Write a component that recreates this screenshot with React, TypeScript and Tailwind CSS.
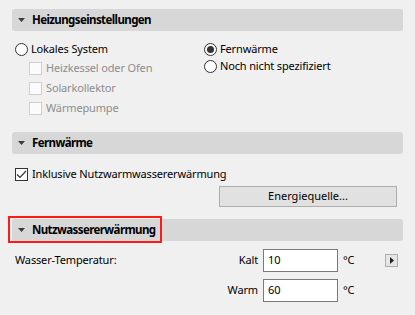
import React from 'react';

const font = { fontFamily: '"Noto Sans", "Segoe UI", sans-serif' };

function Caret() {
  return (
    <svg width="7" height="4" viewBox="0 0 7 4" className="shrink-0">
      <path d="M0 0H7L3.5 4Z" fill="#3c3c3c" />
    </svg>
  );
}

function SectionHeader({ title, marked }: { title: string; marked?: boolean }) {
  return (
    <div className="relative flex h-[22px] items-center gap-[7px] rounded-[3px] bg-[#d7d7d7] pl-[6px]">
      <Caret />
      <span className="text-[11.5px] font-bold leading-none tracking-[-0.6px] text-black">{title}</span>
      {marked && (
        <div className="pointer-events-none absolute left-[-4px] top-[-3px] h-[27px] w-[154px] border-2 border-[#ff1a1a]" />
      )}
    </div>
  );
}

function Radio({ label, checked }: { label: string; checked?: boolean }) {
  return (
    <div className="flex h-[17px] items-center gap-[3px]">
      <span className="flex h-[13px] w-[13px] items-center justify-center rounded-full border border-[#333] bg-white">
        {checked && <span className="h-[7px] w-[7px] rounded-full bg-[#333]" />}
      </span>
      <span className="text-[11px] tracking-[-0.15px] text-black">{label}</span>
    </div>
  );
}

function DisabledCheck({ label }: { label: string }) {
  return (
    <div className="flex h-[20px] items-center gap-[4px] pl-[14px]">
      <span className="h-[13px] w-[13px] border border-[#cfcfcf] bg-[#fbfbfb]" />
      <span className="text-[11px] tracking-[-0.15px] text-[#8d8d8d]">{label}</span>
    </div>
  );
}

function TempRow({
  left,
  label,
  value,
  arrow,
}: {
  left?: string;
  label: string;
  value: string;
  arrow?: boolean;
}) {
  return (
    <div className="flex h-[23px] items-center text-[11px] tracking-[-0.15px] text-black">
      <span className="flex-1 pl-[3px]">{left}</span>
      <span className="mr-[5px]">{label}</span>
      <div className="flex h-[23px] w-[75px] items-center border border-[#7a7a7a] bg-white pl-[4px]">
        {value}
      </div>
      <span className="ml-[5px] w-[42px]">°C</span>
      <div className="mr-[5px] w-[13px]">
        {arrow && (
          <div className="flex h-[13px] w-[13px] items-center justify-center border border-[#adadad] bg-[#e6e6e6]">
            <svg width="4" height="7" viewBox="0 0 4 7">
              <path d="M0 0L4 3.5L0 7Z" fill="#222" />
            </svg>
          </div>
        )}
      </div>
    </div>
  );
}

export default function App() {
  return (
    <div className="h-[315px] w-[415px] overflow-hidden bg-[#f0f0f0] px-[12px] pt-[9px]" style={font}>
      <SectionHeader title="Heizungseinstellungen" />

      <div className="mt-[10px] flex pl-[3px]">
        <div className="w-[189px]">
          <Radio label="Lokales System" />
          <DisabledCheck label="Heizkessel oder Ofen" />
          <DisabledCheck label="Solarkollektor" />
          <DisabledCheck label="Wärmepumpe" />
        </div>
        <div>
          <Radio label="Fernwärme" checked />
          <Radio label="Noch nicht spezifiziert" />
        </div>
      </div>

      <div className="mt-[14px]">
        <SectionHeader title="Fernwärme" />
      </div>

      <div className="mt-[12px] flex h-[16px] items-center gap-[4px] pl-[3px]">
        <span className="flex h-[13px] w-[13px] items-center justify-center border border-[#333] bg-white">
          <svg width="11" height="9" viewBox="0 0 11 9">
            <path d="M1 4.5L4 7.5L10 1" fill="none" stroke="#333" strokeWidth="1.2" />
          </svg>
        </span>
        <span className="text-[11px] tracking-[-0.15px] text-black">Inklusive Nutzwarmwassererwärmung</span>
      </div>

      <div className="mt-[4px] flex justify-end pr-[6px]">
        <button className="flex h-[21px] w-[178px] items-center justify-center border border-[#adadad] bg-[#e1e1e1] text-[11px] text-black">
          Energiequelle...
        </button>
      </div>

      <div className="mt-[12px]">
        <SectionHeader title="Nutzwassererwärmung" marked />
      </div>

      <div className="mt-[8px] flex flex-col gap-[7px]">
        <TempRow left="Wasser-Temperatur:" label="Kalt" value="10" arrow />
        <TempRow label="Warm" value="60" />
      </div>
    </div>
  );
}
